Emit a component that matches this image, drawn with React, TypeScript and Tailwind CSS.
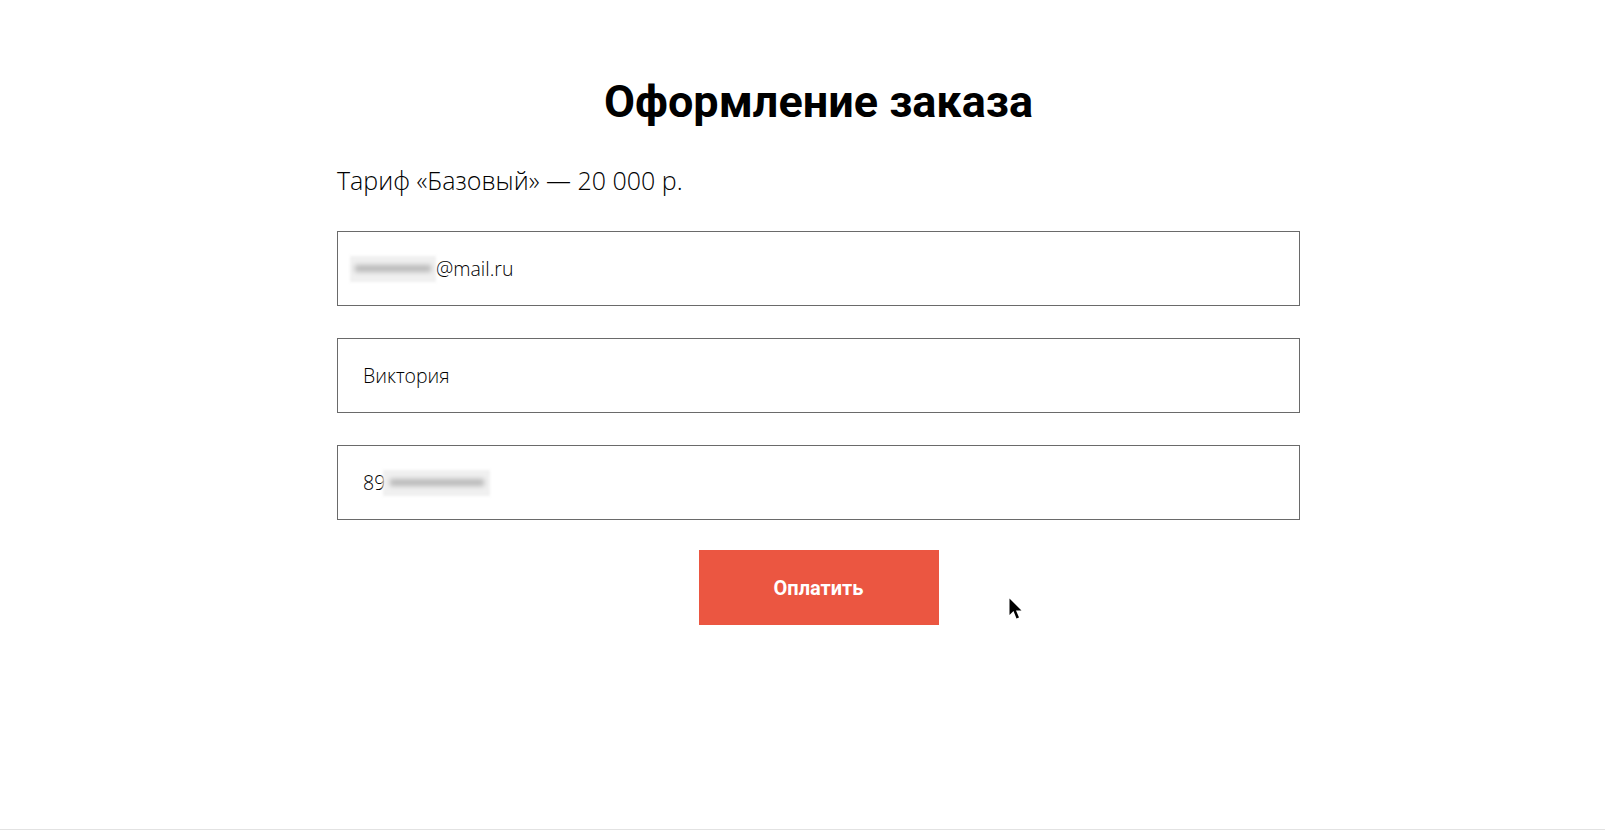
// Order form: title, tariff line, three filled inputs and a pay button

type Field = {
  id: string
  value: string
  hidden?: "before" | "after"
}

const fields: Field[] = [
  { id: "email", value: "@mail.ru", hidden: "before" },
  { id: "name", value: "Виктория" },
  { id: "phone", value: "89", hidden: "after" },
]

// Blurred-out part of a value (privacy smudge in the screenshot)
function Smudge({ width, className = "" }: { width: number; className?: string }) {
  return (
    <span
      className={`inline-flex h-[26px] items-center bg-[#f0f0f0] blur-[1.5px] ${className}`}
      style={{ width }}
    >
      <span className="mx-[6%] h-[7px] w-full bg-[#b8b8b8] blur-[2px]" />
    </span>
  )
}

export default function App() {
  return (
    <div className="relative h-[830px] w-full overflow-hidden border-b border-[#e2e2e2] bg-white">
      <div className="flex justify-center pl-[32px]">
        <div className="w-[963px] pt-[75px]">
          <h1 className="text-center font-['Roboto',sans-serif] text-[45px] font-bold leading-[54px] text-black">
            Оформление заказа
          </h1>

          <p className="mt-[35px] font-['Open_Sans',sans-serif] text-[25px] font-light leading-[32px] text-black">
            Тариф «Базовый» — 20 000 р.
          </p>

          <form className="mt-[35px] flex flex-col gap-[32px]" onSubmit={(e) => e.preventDefault()}>
            {fields.map((field) => (
              <div
                key={field.id}
                className="flex h-[75px] items-center border border-[#6a6a6a] pl-[25px] font-['Open_Sans',sans-serif] text-[19.5px] font-light leading-[24px] text-black"
              >
                {field.hidden === "before" && <Smudge width={86} className="-ml-[13px]" />}
                <span>{field.value}</span>
                {field.hidden === "after" && <Smudge width={107} className="-ml-[2px]" />}
              </div>
            ))}
          </form>

          <div className="mt-[30px] flex justify-center">
            <button
              type="button"
              className="h-[75px] w-[240px] bg-[#eb5641] font-['Roboto',sans-serif] text-[20px] font-bold text-white"
            >
              Оплатить
            </button>
          </div>
        </div>
      </div>

      {/* mouse pointer captured in the screenshot */}
      <svg
        className="absolute left-[1009px] top-[598px]"
        width="15"
        height="22"
        viewBox="0 0 15 22"
      >
        <path d="M0.5 0.5 L0.5 17 L4.5 13 L7.5 20.5 L10 19.5 L7 12.5 L12.5 12.5 Z" fill="#000" />
      </svg>
    </div>
  )
}
